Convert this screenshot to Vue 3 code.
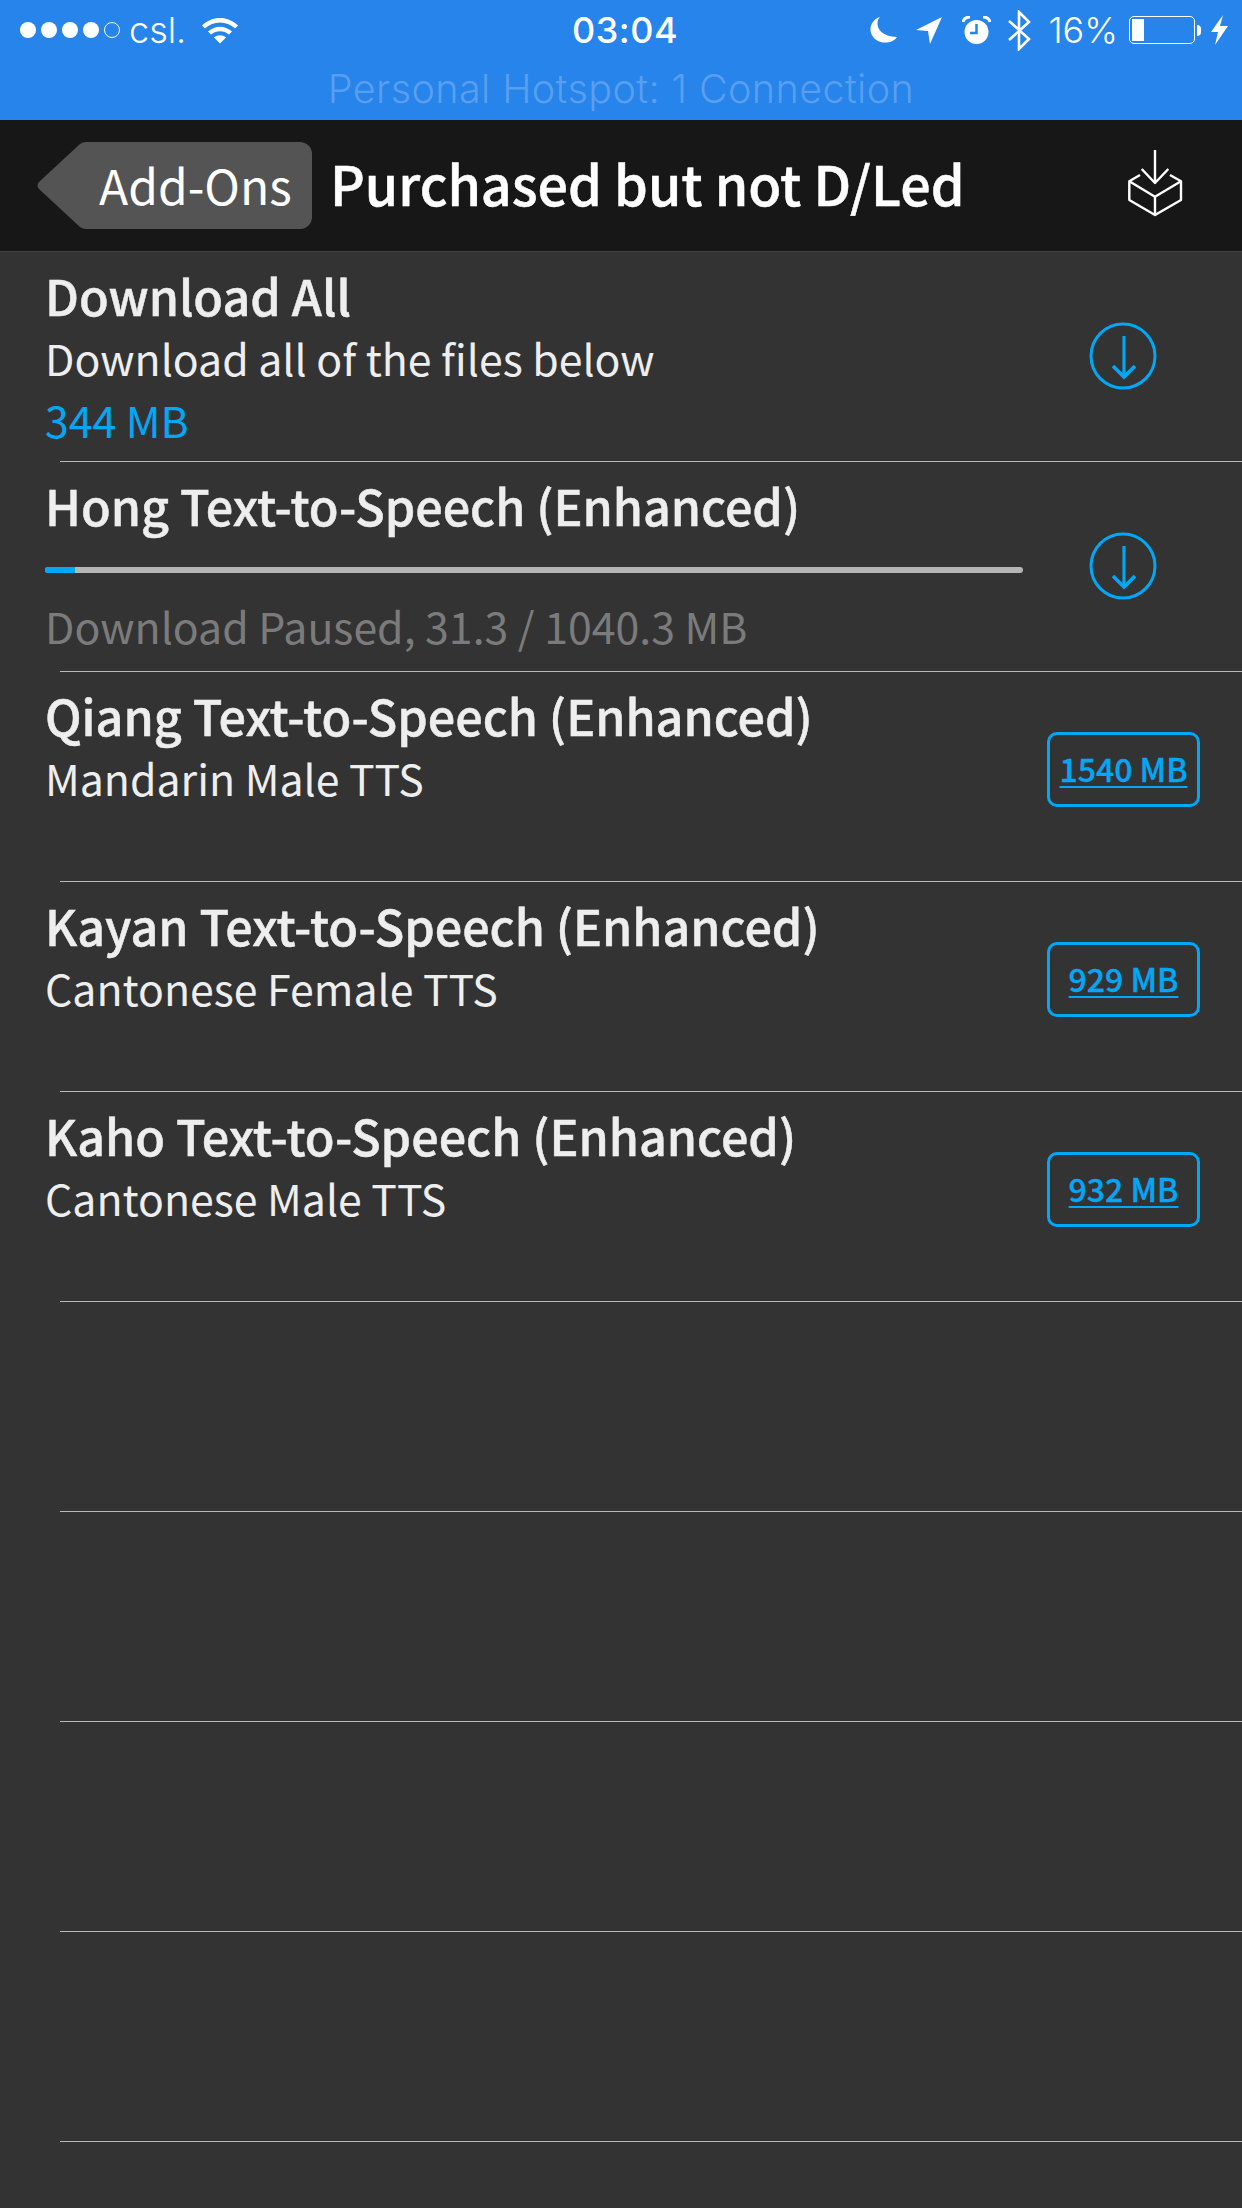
<template>
  <div class="app">
    <header class="status">
      <div class="status-top">
        <div class="carrier">
          <span v-for="n in 5" :key="n" class="dot" :class="{ hollow: n === 5 }"></span>
          <span class="carrier-name">csl.</span>
          <svg class="wifi" width="38" height="28" viewBox="0 0 38 28">
            <path d="M1 9.5C11 -0.5 27 -0.5 37 9.5L34 12.5C26 4.5 12 4.5 4 12.5Z" fill="#fff" />
            <path d="M7 15.5C14 9 24 9 31 15.5L28 18.5C23 14 15 14 10 18.5Z" fill="#fff" />
            <path d="M13 21.5C16.5 18.5 21.5 18.5 25 21.5L19 27.5Z" fill="#fff" />
          </svg>
        </div>
        <div class="time">03:04</div>
        <div class="indicators">
          <svg width="27" height="28" viewBox="0 0 27 28">
            <path d="M10 1C5 6 6 20 27 21C22 29 5 29 1 17C-1 10 3 3 10 1Z" fill="#fff" />
          </svg>
          <svg class="ind-loc" width="26" height="27" viewBox="0 0 26 27">
            <path d="M26 0L14 27L12 14L0 13Z" fill="#fff" />
          </svg>
          <svg class="ind-alarm" width="29" height="28" viewBox="0 0 29 28">
            <circle cx="14.5" cy="16" r="12" fill="#fff" />
            <path d="M14.5 8V17H8" fill="none" stroke="#2784EA" stroke-width="2.5" />
            <path d="M1 6C2 2 4 1 8 1M28 6C27 2 25 1 21 1" fill="none" stroke="#fff" stroke-width="3" />
          </svg>
          <svg class="ind-bt" width="23" height="41" viewBox="0 0 23 41">
            <path d="M1 11L21 29L11 39V2L21 12L1 30" fill="none" stroke="#fff" stroke-width="2.6" />
          </svg>
          <span class="percent">16%</span>
          <div class="battery"><div class="battery-fill"></div></div>
          <span class="battery-nub"></span>
          <svg class="ind-bolt" width="17" height="30" viewBox="0 0 17 30">
            <path d="M12 0L0 17H7L4 30L17 11H9Z" fill="#fff" />
          </svg>
        </div>
      </div>
      <div class="hotspot">Personal Hotspot: 1 Connection</div>
    </header>

    <nav class="navbar">
      <div class="back">
        <svg class="back-tip" width="56" height="87" viewBox="0 0 56 87">
          <path d="M56 0V87H50Q47 87 44 85L3 47Q0 43.500 3 40L44 2Q47 0 50 0Z" fill="#545454" />
        </svg>
        <div class="back-body">Add-Ons</div>
      </div>
      <div class="nav-title">Purchased but not D/Led</div>
      <svg class="box-icon" width="56" height="68" viewBox="0 0 56 68">
        <g fill="none" stroke="#fff" stroke-width="2.4" stroke-linejoin="round">
          <path d="M28 0V33M14.700 19L28 33L41.300 19" />
          <path d="M13 25L2.300 31.300V50L28 65L54 50V31.300L43 25" />
          <path d="M2.300 31.300L28 46.700L54 31.300M28 46.700V65" />
        </g>
      </svg>
    </nav>

    <section class="list">
      <template v-for="row in rows" :key="row.id">
        <div class="row">
          <div class="row-main">
            <div v-if="row.title" class="row-title">{{ row.title }}</div>
            <div v-if="row.done" class="progress">
              <div class="progress-fill" :style="{ width: `${row.done}px` }"></div>
            </div>
            <div v-if="row.sub" class="row-sub">{{ row.sub }}</div>
            <div v-if="row.size" class="row-size">{{ row.size }}</div>
            <div v-if="row.status" class="row-status">{{ row.status }}</div>
          </div>
          <svg v-if="row.icon" class="dl-icon" width="68" height="68" viewBox="0 0 68 68">
            <g fill="none" stroke="#00a8f5">
              <circle cx="34" cy="34" r="32" stroke-width="3" />
              <path d="M35 14V55" stroke-width="3.200" />
              <path d="M24 44L35 55L46 44" stroke-width="3.600" />
            </g>
          </svg>
          <a v-if="row.badge" class="badge">{{ row.badge }}</a>
        </div>
        <div class="sep"></div>
      </template>
    </section>
  </div>
</template>

<script setup>
const rows = [
  { id: 1, title: 'Download All', sub: 'Download all of the files below', size: '344 MB', icon: true },
  { id: 2, title: 'Hong Text-to-Speech (Enhanced)', status: 'Download Paused, 31.3 / 1040.3 MB', done: 30, icon: true },
  { id: 3, title: 'Qiang Text-to-Speech (Enhanced)', sub: 'Mandarin Male TTS', badge: '1540 MB' },
  { id: 4, title: 'Kayan Text-to-Speech (Enhanced)', sub: 'Cantonese Female TTS', badge: '929 MB' },
  { id: 5, title: 'Kaho Text-to-Speech (Enhanced)', sub: 'Cantonese Male TTS', badge: '932 MB' },
  { id: 6 },
  { id: 7 },
  { id: 8 },
  { id: 9 },
  { id: 10 }
]
</script>

<style>
html, body { background: #333; }
</style>

<style scoped>
.app {
  width: 1242px;
  height: 2208px;
  overflow: hidden;
  background: #333;
  font-family: "Noto Sans CJK SC", "Noto Sans", sans-serif;
}

.status {
  height: 120px;
  background: #2784ea;
  color: #fff;
  font-family: Inter, "Liberation Sans", sans-serif;
}
.status-top {
  display: grid;
  grid-template-columns: 1fr auto 1fr;
  height: 60px;
  align-items: center;
  padding-right: 14px;
  box-sizing: border-box;
}
.carrier {
  display: flex;
  align-items: center;
  padding-left: 20px;
}
.dot {
  width: 16px;
  height: 16px;
  margin-right: 5px;
  border-radius: 50%;
  background: #fff;
  box-sizing: border-box;
}
.dot.hollow {
  background: none;
  border: 1px solid #fff;
}
.carrier-name {
  margin-left: 4px;
  font-size: 36px;
  font-weight: 300;
}
.wifi { margin-left: 15px; }
.time {
  font-size: 36px;
  font-weight: 500;
  letter-spacing: 0.5px;
  padding-left: 22px;
}
.indicators {
  display: flex;
  align-items: center;
  justify-content: flex-end;
}
.ind-loc { margin-left: 19px; }
.ind-alarm { margin-left: 20px; }
.ind-bt { margin-left: 17px; }
.percent {
  margin-left: 17px;
  font-size: 36px;
  font-weight: 300;
}
.battery {
  width: 66px;
  height: 28px;
  margin-left: 11px;
  padding: 2px;
  box-sizing: border-box;
  border: 1px solid #fff;
  border-radius: 5px;
}
.battery-fill {
  width: 12px;
  height: 100%;
  background: #fff;
}
.battery-nub {
  width: 4px;
  height: 11px;
  margin-left: 2px;
  background: #fff;
  border-radius: 0 4px 4px 0;
}
.ind-bolt { margin-left: 10px; }
.hotspot {
  height: 60px;
  line-height: 58px;
  text-align: center;
  font-size: 39.500px;
  font-weight: 300;
  color: #5a9fee;
  letter-spacing: 0.4px;
}

.navbar {
  display: flex;
  align-items: center;
  height: 132px;
  box-sizing: border-box;
  padding-left: 36px;
  background: #171717;
  border-bottom: 1px solid #444;
}
.back {
  display: flex;
  height: 87px;
}
.back-tip { display: block; }
.back-body {
  width: 220px;
  padding-left: 7px;
  box-sizing: border-box;
  background: #545454;
  border-radius: 0 12px 12px 0;
  color: #fff;
  font-size: 48px;
  font-weight: 400;
  line-height: 84px;
}
.nav-title {
  flex: 1;
  margin-left: 18px;
  margin-bottom: 6px;
  color: #fff;
  font-size: 53.800px;
  font-weight: 500;
  line-height: 60px;
  -webkit-text-stroke: 0.5px #fff;
  white-space: nowrap;
}
.box-icon {
  margin-right: 59px;
  margin-bottom: 3px;
}

.row {
  display: flex;
  align-items: center;
  height: 209px;
  padding-left: 45px;
}
.row-main {
  flex: 1;
  align-self: flex-start;
  color: #eee;
}
.row-title {
  margin-top: 12px;
  font-size: 48.500px;
  font-weight: 500;
  line-height: 62px;
  -webkit-text-stroke: 0.5px #eee;
  white-space: nowrap;
}
.row-sub {
  font-size: 42.800px;
  font-weight: 400;
  line-height: 63px;
  white-space: nowrap;
}
.row-size {
  font-size: 42.800px;
  font-weight: 400;
  line-height: 60px;
  color: #00a8f5;
}
.progress {
  width: 978px;
  height: 6px;
  margin-top: 31px;
  border-radius: 3px;
  overflow: hidden;
  background: #b5b5b5;
}
.progress-fill {
  height: 100%;
  background: #00a8f5;
}
.row-status {
  margin-top: 21px;
  font-size: 42.800px;
  font-weight: 400;
  line-height: 62px;
  color: #7b7b7b;
  white-space: nowrap;
}
.dl-icon {
  margin-right: 85px;
  margin-top: -2px;
}
.badge {
  width: 153px;
  height: 75px;
  margin: -15px 42px 0 0;
  box-sizing: border-box;
  border: 3px solid #00a8f5;
  border-radius: 10px;
  color: #00a8f5;
  font-size: 32px;
  font-weight: 500;
  line-height: 66px;
  text-align: center;
  text-decoration: underline;
  text-decoration-thickness: 2px;
  text-underline-offset: 4px;
  -webkit-text-stroke: 0.3px #00a8f5;
}
.sep {
  height: 1px;
  margin-left: 60px;
  background: #b9b9b9;
}
</style>
